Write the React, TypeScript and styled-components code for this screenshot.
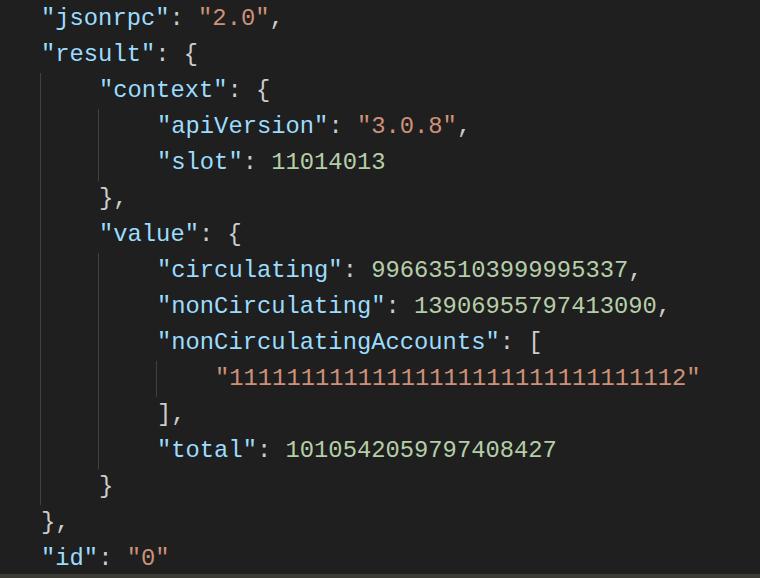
import React from "react";
import styled, { createGlobalStyle } from "styled-components";

const Global = createGlobalStyle`
  html, body { margin: 0; padding: 0; background: #1f1f1f; }
  body { overflow: hidden; }
`;

type Kind = "key" | "str" | "num" | "punc";
type Tok = [Kind, string];
type Line = { level: number; toks: Tok[] };

const lines: Line[] = [
  { level: 1, toks: [["key", '"jsonrpc"'], ["punc", ": "], ["str", '"2.0"'], ["punc", ","]] },
  { level: 1, toks: [["key", '"result"'], ["punc", ": {"]] },
  { level: 2, toks: [["key", '"context"'], ["punc", ": {"]] },
  { level: 3, toks: [["key", '"apiVersion"'], ["punc", ": "], ["str", '"3.0.8"'], ["punc", ","]] },
  { level: 3, toks: [["key", '"slot"'], ["punc", ": "], ["num", "11014013"]] },
  { level: 2, toks: [["punc", "},"]] },
  { level: 2, toks: [["key", '"value"'], ["punc", ": {"]] },
  { level: 3, toks: [["key", '"circulating"'], ["punc", ": "], ["num", "996635103999995337"], ["punc", ","]] },
  { level: 3, toks: [["key", '"nonCirculating"'], ["punc", ": "], ["num", "13906955797413090"], ["punc", ","]] },
  { level: 3, toks: [["key", '"nonCirculatingAccounts"'], ["punc", ": ["]] },
  { level: 4, toks: [["str", '"11111111111111111111111111111112"']] },
  { level: 3, toks: [["punc", "],"]] },
  { level: 3, toks: [["key", '"total"'], ["punc", ": "], ["num", "1010542059797408427"]] },
  { level: 2, toks: [["punc", "}"]] },
  { level: 1, toks: [["punc", "},"]] },
  { level: 1, toks: [["key", '"id"'], ["punc", ": "], ["str", '"0"']] },
];

const colors: Record<Kind, string> = {
  key: "#9cdcfe",
  str: "#ce9178",
  num: "#b5cea8",
  punc: "#cccccc",
};

const Page = styled.div`
  height: 578px;
  display: flex;
  flex-direction: column;
  background: #1f1f1f;
`;

const Editor = styled.div`
  flex: 1;
  overflow: hidden;
  padding: 1px 0 0 40px;
  font-family: "Liberation Mono", "DejaVu Sans Mono", monospace;
  font-size: 23.8px;
  line-height: 36px;
  white-space: pre;
`;

const Row = styled.div`
  display: flex;
  height: 36px;
`;

const Guide = styled.span`
  width: 58px;
  flex: none;
  border-left: 1px solid #404040;
  box-sizing: border-box;
`;

const Code = styled.span`
  padding-left: 1px;
`;

const Token = styled.span<{ $kind: Kind }>`
  color: ${(p) => colors[p.$kind]};
`;

const ScrollBar = styled.div`
  height: 4px;
  flex: none;
  background: #3b3b34;
`;

export default function App() {
  return (
    <>
      <Global />
      <Page>
        <Editor>
          {lines.map((l, i) => (
            <Row key={i}>
              {Array.from({ length: l.level - 1 }).map((_, g) => (
                <Guide key={g} />
              ))}
              <Code>
                {l.toks.map(([k, t], j) => (
                  <Token key={j} $kind={k}>
                    {t}
                  </Token>
                ))}
              </Code>
            </Row>
          ))}
        </Editor>
        <ScrollBar />
      </Page>
    </>
  );
}
